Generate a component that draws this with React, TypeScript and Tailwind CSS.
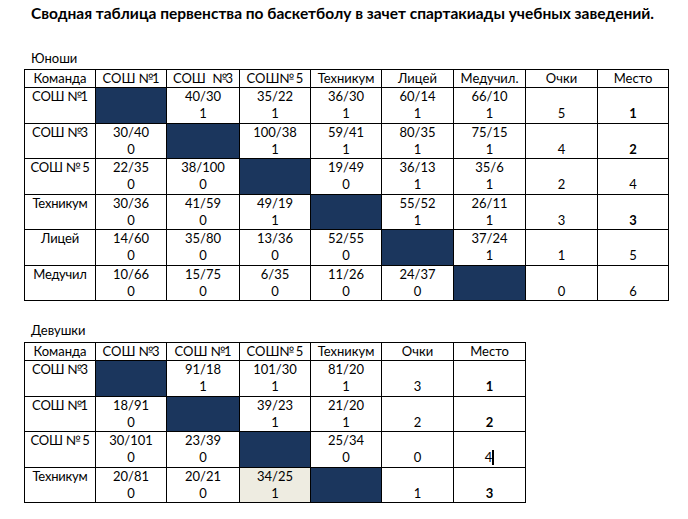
import React from 'react';

type Cell = { top?: string; bottom?: string; blue?: boolean; beige?: boolean; bold?: boolean; cursor?: boolean };

const boysHead = ['Команда', 'СОШ №1', 'СОШ  №3', 'СОШ№ 5', 'Техникум', 'Лицей', 'Медучил.', 'Очки', 'Место'];
const boysCols = 'grid-cols-[71px_71px_73px_71px_71px_72px_72px_72px_71px]';

const B: Cell = { blue: true };
const s = (top: string, bottom: string): Cell => ({ top, bottom });

const boys: { name: string; cells: Cell[] }[] = [
  { name: 'СОШ №1', cells: [B, s('40/30', '1'), s('35/22', '1'), s('36/30', '1'), s('60/14', '1'), s('66/10', '1'), { bottom: '5' }, { bottom: '1', bold: true }] },
  { name: 'СОШ №3', cells: [s('30/40', '0'), B, s('100/38', '1'), s('59/41', '1'), s('80/35', '1'), s('75/15', '1'), { bottom: '4' }, { bottom: '2', bold: true }] },
  { name: 'СОШ № 5', cells: [s('22/35', '0'), s('38/100', '0'), B, s('19/49', '0'), s('36/13', '1'), s('35/6', '1'), { bottom: '2' }, { bottom: '4' }] },
  { name: 'Техникум', cells: [s('30/36', '0'), s('41/59', '0'), s('49/19', '1'), B, s('55/52', '1'), s('26/11', '1'), { bottom: '3' }, { bottom: '3', bold: true }] },
  { name: 'Лицей', cells: [s('14/60', '0'), s('35/80', '0'), s('13/36', '0'), s('52/55', '0'), B, s('37/24', '1'), { bottom: '1' }, { bottom: '5' }] },
  { name: 'Медучил', cells: [s('10/66', '0'), s('15/75', '0'), s('6/35', '0'), s('11/26', '0'), s('24/37', '0'), B, { bottom: '0' }, { bottom: '6' }] },
];

const girlsHead = ['Команда', 'СОШ №3', 'СОШ №1', 'СОШ№ 5', 'Техникум', 'Очки', 'Место'];
const girlsCols = 'grid-cols-[71px_71px_73px_71px_71px_72px_72px]';

const girls: { name: string; cells: Cell[] }[] = [
  { name: 'СОШ №3', cells: [B, s('91/18', '1'), s('101/30', '1'), s('81/20', '1'), { bottom: '3' }, { bottom: '1', bold: true }] },
  { name: 'СОШ №1', cells: [s('18/91', '0'), B, s('39/23', '1'), s('21/20', '1'), { bottom: '2' }, { bottom: '2', bold: true }] },
  { name: 'СОШ № 5', cells: [s('30/101', '0'), s('23/39', '0'), B, s('25/34', '0'), { bottom: '0' }, { bottom: '4', cursor: true }] },
  { name: 'Техникум', cells: [s('20/81', '0'), s('20/21', '0'), { top: '34/25', bottom: '1', beige: true }, B, { bottom: '1' }, { bottom: '3', bold: true }] },
];

// Lato's № is much wider than Calibri's, so squeeze it a little
function Label({ text }: { text: string }) {
  const parts = text.split('№');
  if (parts.length === 1) return <>{text}</>;
  return (
    <>
      {parts[0]}
      <span className="tracking-[-2px]">№</span>
      {parts[1]}
    </>
  );
}

function DataCell({ c }: { c: Cell }) {
  if (c.blue) return <div className="h-[35.5px] border-r border-b border-black bg-[#1b365d]" />;
  return (
    <div className={`h-[35.5px] border-r border-b border-black text-center leading-[17px] ${c.beige ? 'bg-[#eeece1]' : ''}`}>
      <div className="h-[17px]">{c.top ?? ''}</div>
      <div className={`h-[17px] ${c.bold ? 'font-bold' : ''}`}>
        {c.bottom}
        {c.cursor && <span className="inline-block w-[2px] h-[15px] bg-black align-[-3px]" />}
      </div>
    </div>
  );
}

function Table({ head, cols, rows }: { head: string[]; cols: string; rows: { name: string; cells: Cell[] }[] }) {
  return (
    <div className={`grid ${cols} w-fit border-l border-t border-black text-[13px] text-black`}>
      {head.map((h, i) => (
        <div key={i} className="h-[18px] border-r border-b border-black text-center leading-[17px] whitespace-pre">
          <Label text={h} />
        </div>
      ))}
      {rows.map((r) => (
        <React.Fragment key={r.name}>
          <div className="h-[35.5px] border-r border-b border-black text-center leading-[17px] tracking-[-0.2px]">
            <Label text={r.name} />
          </div>
          {r.cells.map((c, i) => (
            <DataCell key={i} c={c} />
          ))}
        </React.Fragment>
      ))}
    </div>
  );
}

export default function App() {
  return (
    <div className="w-[688px] h-[519px] bg-white pl-[24px] font-['Lato','Liberation_Sans',sans-serif] text-black">
      <h1 className="ml-[7px] pt-[4px] text-[15.5px] leading-[18px] font-bold">
        Сводная таблица первенства по баскетболу в зачет спартакиады учебных заведений.
      </h1>
      <div className="ml-[7px] mt-[28px] mb-[3px] text-[13px] leading-[16px]">Юноши</div>
      <Table head={boysHead} cols={boysCols} rows={boys} />
      <div className="ml-[7px] mt-[21px] mb-[4px] text-[13px] leading-[16px]">Девушки</div>
      <Table head={girlsHead} cols={girlsCols} rows={girls} />
    </div>
  );
}
